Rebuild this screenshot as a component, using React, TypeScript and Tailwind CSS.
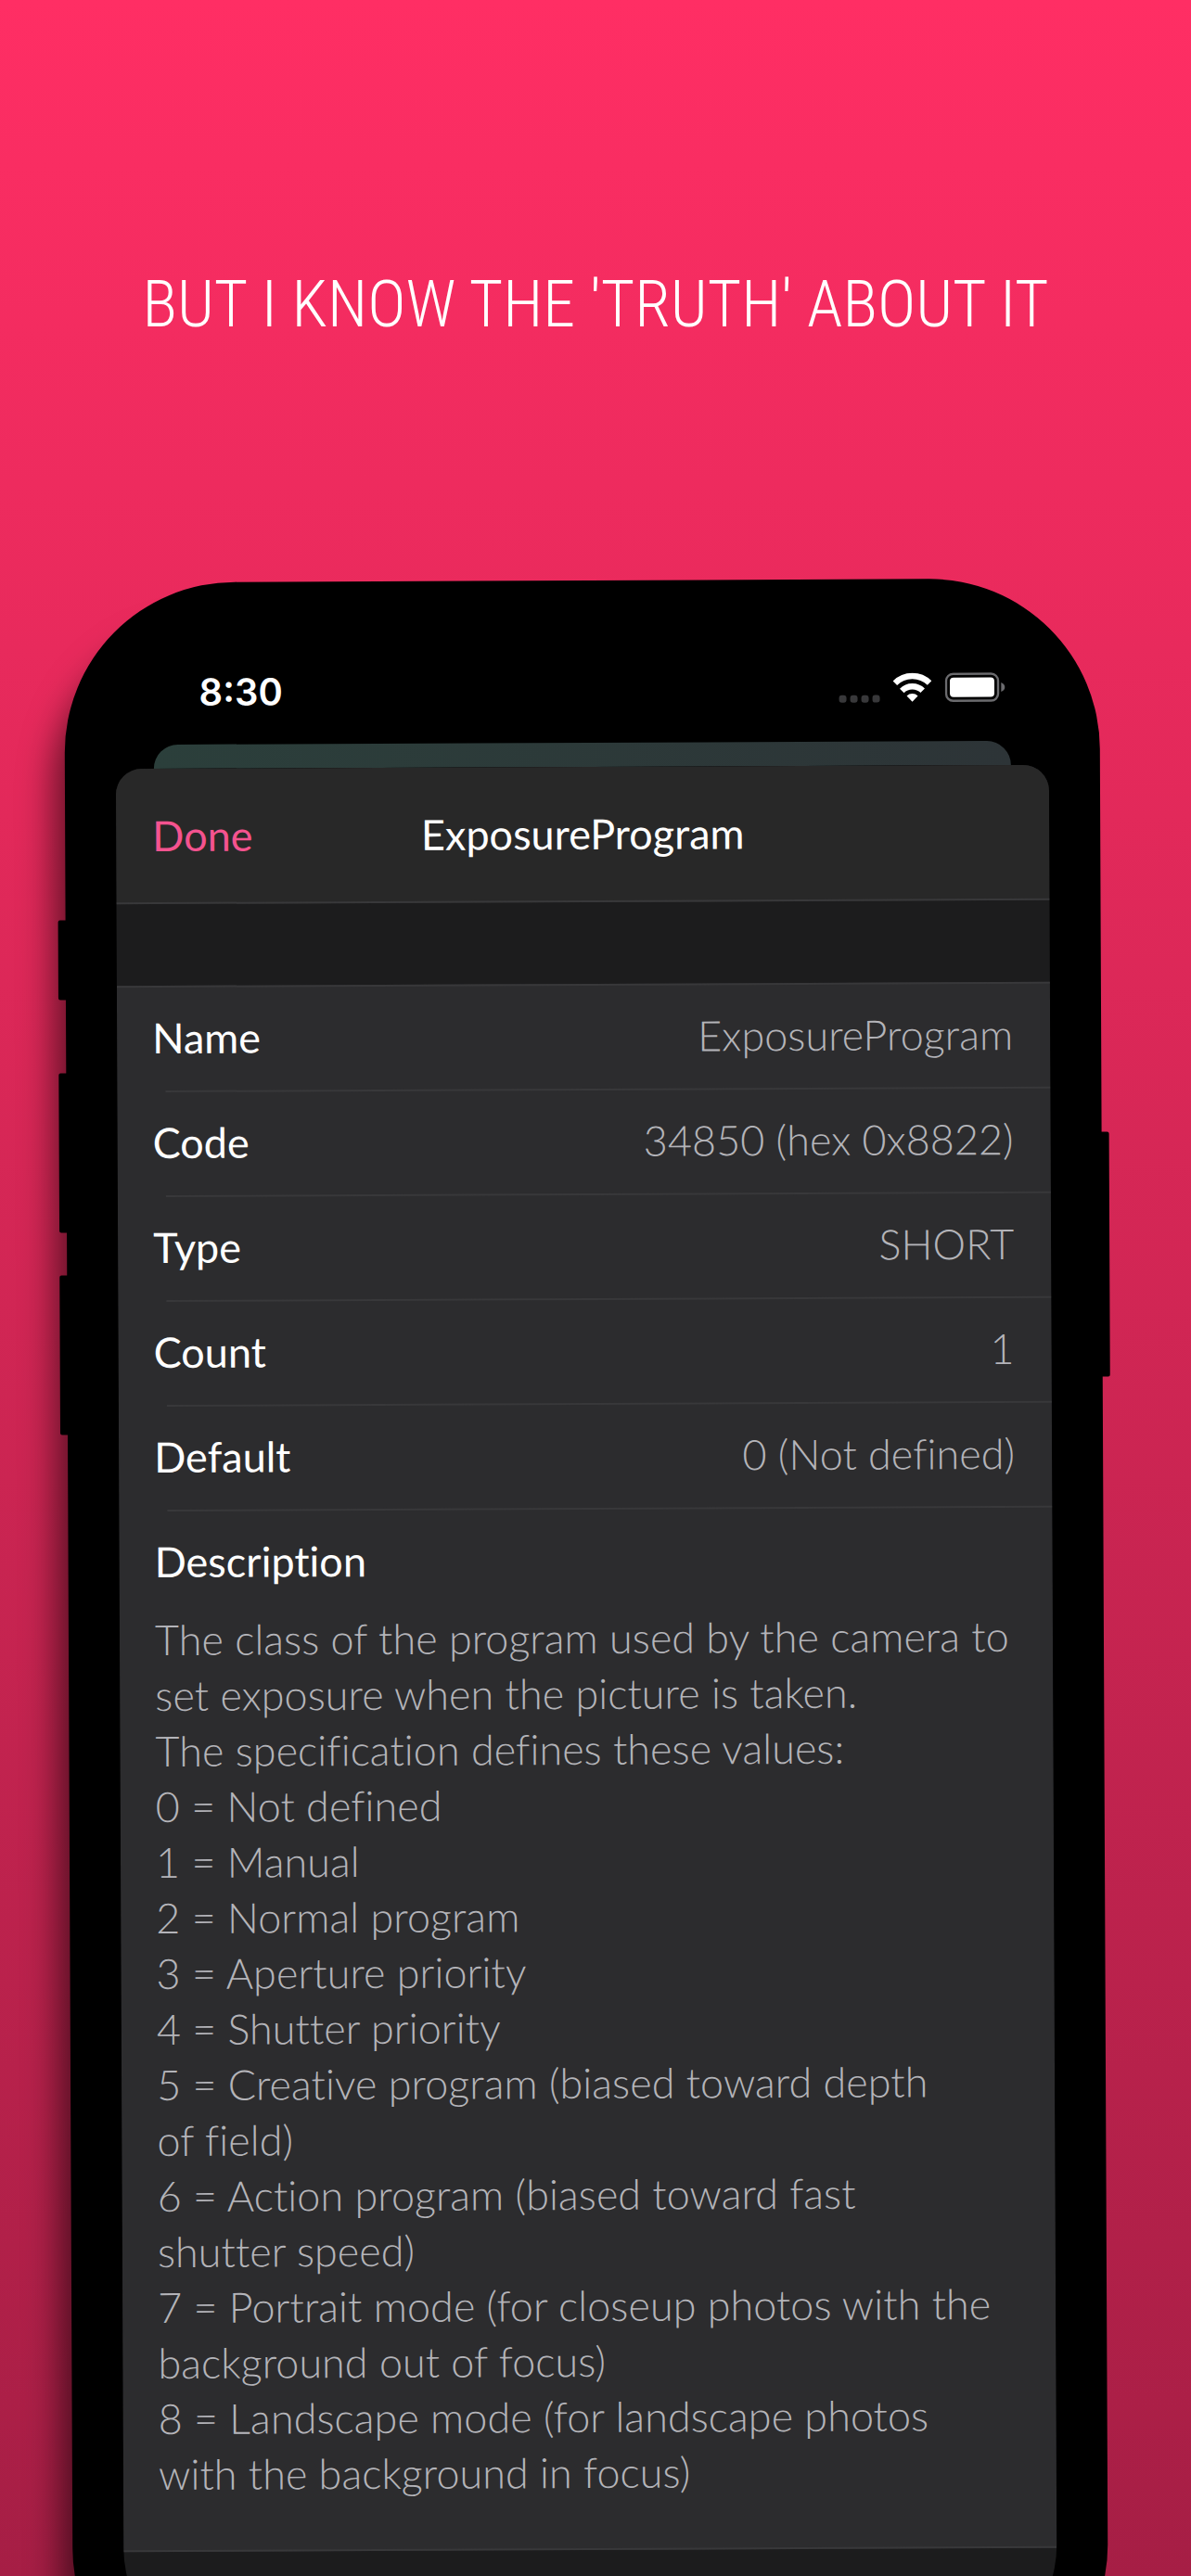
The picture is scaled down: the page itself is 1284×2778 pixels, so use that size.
import React from "react";

const fields = [
  { name: "Name", value: "ExposureProgram" },
  { name: "Code", value: "34850 (hex 0x8822)" },
  { name: "Type", value: "SHORT" },
  { name: "Count", value: "1" },
  { name: "Default", value: "0 (Not defined)" },
];

const description = [
  "The class of the program used by the camera to",
  "set exposure when the picture is taken.",
  "The specification defines these values:",
  "0 = Not defined",
  "1 = Manual",
  "2 = Normal program",
  "3 = Aperture priority",
  "4 = Shutter priority",
  "5 = Creative program (biased toward depth",
  "of field)",
  "6 = Action program (biased toward fast",
  "shutter speed)",
  "7 = Portrait mode (for closeup photos with the",
  "background out of focus)",
  "8 = Landscape mode (for landscape photos",
  "with the background in focus)",
];

function WifiIcon() {
  return (
    <svg viewBox="0 0 42 32" className="h-8 w-[42px]" fill="none" aria-hidden="true">
      <path d="M2.4 11.2a26.500 26.500 0 0 1 37.2 0" stroke="#fff" strokeWidth="6.4" />
      <path d="M9.8 19.4a15.8 15.8 0 0 1 22.4 0" stroke="#fff" strokeWidth="6.4" />
      <path d="M21 31.4l-6-6.3a8.6 8.6 0 0 1 12 0z" fill="#fff" />
    </svg>
  );
}

function BatteryIcon() {
  return (
    <svg viewBox="0 0 66 32" className="h-8 w-[66px]" fill="none" aria-hidden="true">
      <rect x="1.5" y="1.5" width="56" height="29" rx="7.5" stroke="#6b6b6e" strokeWidth="2.4" />
      <rect x="5.5" y="5.5" width="48" height="21" rx="4" fill="#fff" />
      <path d="M60.8 11v10c2.6-1 4-2.8 4-5s-1.4-4-4-5z" fill="#6b6b6e" />
    </svg>
  );
}

function StatusBar() {
  return (
    <div className="flex h-[175px] items-end justify-between pb-[42px] pl-[90px] pr-[46px]">
      <time className="font-['Inter',sans-serif] text-[40px] leading-7 font-semibold text-white">8:30</time>
      <div className="flex items-end gap-3.5">
        <div className="flex gap-1">
          <span className="size-2 rounded-[3px] bg-[#38383a]" />
          <span className="size-2 rounded-[3px] bg-[#38383a]" />
          <span className="size-2 rounded-[3px] bg-[#38383a]" />
          <span className="size-2 rounded-[3px] bg-[#38383a]" />
        </div>
        <WifiIcon />
        <BatteryIcon />
      </div>
    </div>
  );
}

export default function App() {
  return (
    <main className="flex h-screen flex-col overflow-hidden bg-linear-to-b from-[#ff2e64] to-[#a61e45] font-['Lato',sans-serif]">
      <h1 className="flex h-[626px] shrink-0 justify-center pt-[286px] text-center font-['Roboto_Condensed',sans-serif] text-[70px] leading-[84px] font-light text-white">
        BUT I KNOW THE 'TRUTH' ABOUT IT
      </h1>

      <div className="relative mr-[99px] ml-[69px] shrink-0 origin-top -rotate-[0.25deg] rounded-[184px] bg-black px-[55px] pb-[54px] shadow-[-30px_36px_36px_-18px_rgba(0,0,0,0.55)]">
        <span className="absolute top-[364px] -left-2 h-[86px] w-3 rounded-l-xs bg-black" />
        <span className="absolute top-[529px] -left-2 h-[172px] w-3 rounded-l-xs bg-black" />
        <span className="absolute top-[747px] -left-2 h-[172px] w-3 rounded-l-xs bg-black" />
        <span className="absolute top-[597px] -right-2 h-[264px] w-3 rounded-r-xs bg-black" />

        <StatusBar />

        <div className="mx-[41px] h-[26px] rounded-t-[26px] bg-linear-to-r from-[#2b3f3b] to-[#2d3437]" />

        <section className="overflow-hidden rounded-t-[28px] rounded-b-[130px] bg-[#1c1c1d] pb-[126px] [font-variant-ligatures:none]">
          <header className="grid h-[146px] grid-cols-[1fr_auto_1fr] items-center border-b-2 border-[#38383a] bg-[#282828] px-[39px] text-[45px] leading-[60px]">
            <button type="button" className="justify-self-start text-[#f4538f]">
              Done
            </button>
            <h2 className="text-white">ExposureProgram</h2>
          </header>

          <div className="mt-[88px] border-y-2 border-[#38383a] bg-[#2c2c2e]">
            <dl>
              {fields.map((field) => (
                <div
                  key={field.name}
                  className="ml-[52px] flex h-[113px] items-center justify-between border-b-2 border-[#38383a] pr-10 pb-1 text-[45px] leading-[60px]"
                >
                  <dt className="-ml-3.5 text-white">{field.name}</dt>
                  <dd className="font-light text-[#b4b4b9]">{field.value}</dd>
                </div>
              ))}
            </dl>
            <div className="px-[38px] pt-6 pb-[52px] text-[45px] leading-[60px]">
              <h3 className="mb-6 text-white">Description</h3>
              <div className="font-light whitespace-nowrap text-[#b4b4b9]">
                {description.map((line) => (
                  <p key={line}>{line}</p>
                ))}
              </div>
            </div>
          </div>
        </section>
      </div>
    </main>
  );
}
